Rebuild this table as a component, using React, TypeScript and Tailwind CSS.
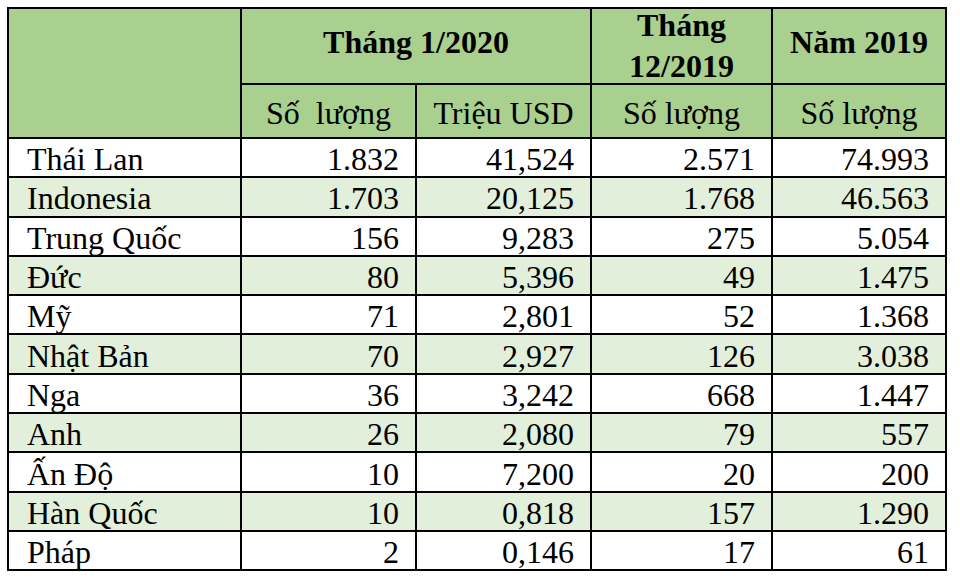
const rows: [string, string, string, string, string][] = [
  ['Thái Lan', '1.832', '41,524', '2.571', '74.993'],
  ['Indonesia', '1.703', '20,125', '1.768', '46.563'],
  ['Trung Quốc', '156', '9,283', '275', '5.054'],
  ['Đức', '80', '5,396', '49', '1.475'],
  ['Mỹ', '71', '2,801', '52', '1.368'],
  ['Nhật Bản', '70', '2,927', '126', '3.038'],
  ['Nga', '36', '3,242', '668', '1.447'],
  ['Anh', '26', '2,080', '79', '557'],
  ['Ấn Độ', '10', '7,200', '20', '200'],
  ['Hàn Quốc', '10', '0,818', '157', '1.290'],
  ['Pháp', '2', '0,146', '17', '61'],
];

const head = 'flex items-center justify-center bg-[#a9d08e] text-center';

export default function App() {
  return (
    <div className="h-[580px] w-[960px] bg-white pl-[7px] pt-[7px] font-['Liberation_Serif','Times_New_Roman',serif] text-[32px] leading-none text-black">
      {/* black background + 2px gaps draw the grid lines */}
      <div className="grid w-[940px] grid-cols-[231px_173px_173px_179px_172px] grid-rows-[74px_52px_repeat(11,37.3px)] gap-[2px] border-2 border-black bg-black">
        <div className="row-span-2 bg-[#a9d08e]" />
        <div className={`${head} col-span-2 pb-[8px] font-bold`}>Tháng 1/2020</div>
        <div className={`${head} font-bold leading-[41px]`}>
          <div>
            Tháng
            <br />
            12/2019
          </div>
        </div>
        <div className={`${head} pb-[8px] font-bold`}>Năm 2019</div>

        <div className={`${head} whitespace-pre pt-[3px]`}>Số  lượng</div>
        <div className={`${head} pt-[3px]`}>Triệu USD</div>
        <div className={`${head} pt-[3px]`}>Số lượng</div>
        <div className={`${head} pt-[3px]`}>Số lượng</div>

        {rows.map((r, i) => {
          const bg = i % 2 === 1 ? 'bg-[#e2efda]' : 'bg-white';
          return [
            <div key={`${r[0]}-n`} className={`${bg} flex items-center pl-[18px] pt-[3px]`}>
              {r[0]}
            </div>,
            ...r.slice(1).map((v, j) => (
              <div key={`${r[0]}-${j}`} className={`${bg} flex items-center justify-end pr-[16px] pt-[3px]`}>
                {v}
              </div>
            )),
          ];
        })}
      </div>
    </div>
  );
}
